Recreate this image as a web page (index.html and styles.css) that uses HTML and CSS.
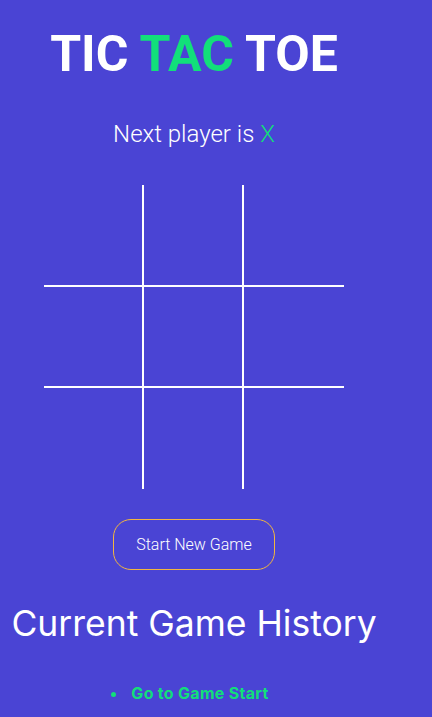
FILE: index.html
```html
<!DOCTYPE html>
<html>
<head>
<meta charset="utf-8">
<link rel="stylesheet" href="styles.css">
</head>
<body>
<main class="app">
  <h1 class="title">TIC <span class="accent">TAC</span> TOE</h1>
  <p class="status">Next player is <span class="accent">X</span></p>
  <div class="board">
    <button class="sq"></button><button class="sq"></button><button class="sq"></button>
    <button class="sq"></button><button class="sq"></button><button class="sq"></button>
    <button class="sq"></button><button class="sq"></button><button class="sq"></button>
  </div>
  <button class="restart">Start New Game</button>
  <h2 class="history-title">Current Game History</h2>
  <ul class="history">
    <li class="move"><button class="move-btn">Go to Game Start</button></li>
  </ul>
</main>
</body>
</html>
```

FILE: styles.css
```css
html, body {
  margin: 0;
  padding: 0;
  background: #4a44d4;
  height: 100%;
  overflow: hidden;
}
body {
  font-family: Roboto, "Noto Sans", sans-serif;
  color: #ffffff;
}
.app {
  width: 388px;
  display: flex;
  flex-direction: column;
  align-items: center;
  text-align: center;
}
.accent {
  color: #12df7a;
}
.title {
  margin: 25px 0 0 0;
  font-size: 50px;
  font-weight: 700;
  line-height: normal;
}
.status {
  margin: 37px 0 0 0;
  font-size: 24px;
  font-weight: 300;
  line-height: normal;
}
.board {
  margin-top: 37px;
  display: grid;
  grid-template-columns: 100px 100px 100px;
  grid-template-rows: 102px 101px 101px;
}
.sq {
  box-sizing: border-box;
  margin: 0;
  padding: 0;
  background: transparent;
  border: 0 solid #ffffff;
}
.sq:nth-child(3n+1), .sq:nth-child(3n+2) {
  border-right-width: 2px;
}
.sq:nth-child(-n+6) {
  border-bottom-width: 2px;
}
.restart {
  margin-top: 30px;
  width: 162px;
  height: 51px;
  box-sizing: border-box;
  background: transparent;
  border: 1px solid #f2b640;
  border-radius: 18px;
  color: #ffffff;
  font-family: Roboto, sans-serif;
  font-weight: 300;
  font-size: 16px;
  padding: 0;
}
.history-title {
  margin: 32px 0 0 0;
  font-family: Inter, sans-serif;
  font-size: 35.5px;
  font-weight: 400;
  line-height: normal;
}
.history {
  margin: 38px 0 0 0;
  padding: 0 8px 0 0;
  list-style: disc inside;
  color: #12df7a;
  font-family: Inter, sans-serif;
}
.move {
  font-size: 16px;
}
.move-btn {
  background: transparent;
  border: 0;
  padding: 0;
  margin-left: -2px;
  color: #12df7a;
  font-family: Inter, sans-serif;
  font-weight: 700;
  font-size: 16px;
  letter-spacing: 0.3px;
}
```
